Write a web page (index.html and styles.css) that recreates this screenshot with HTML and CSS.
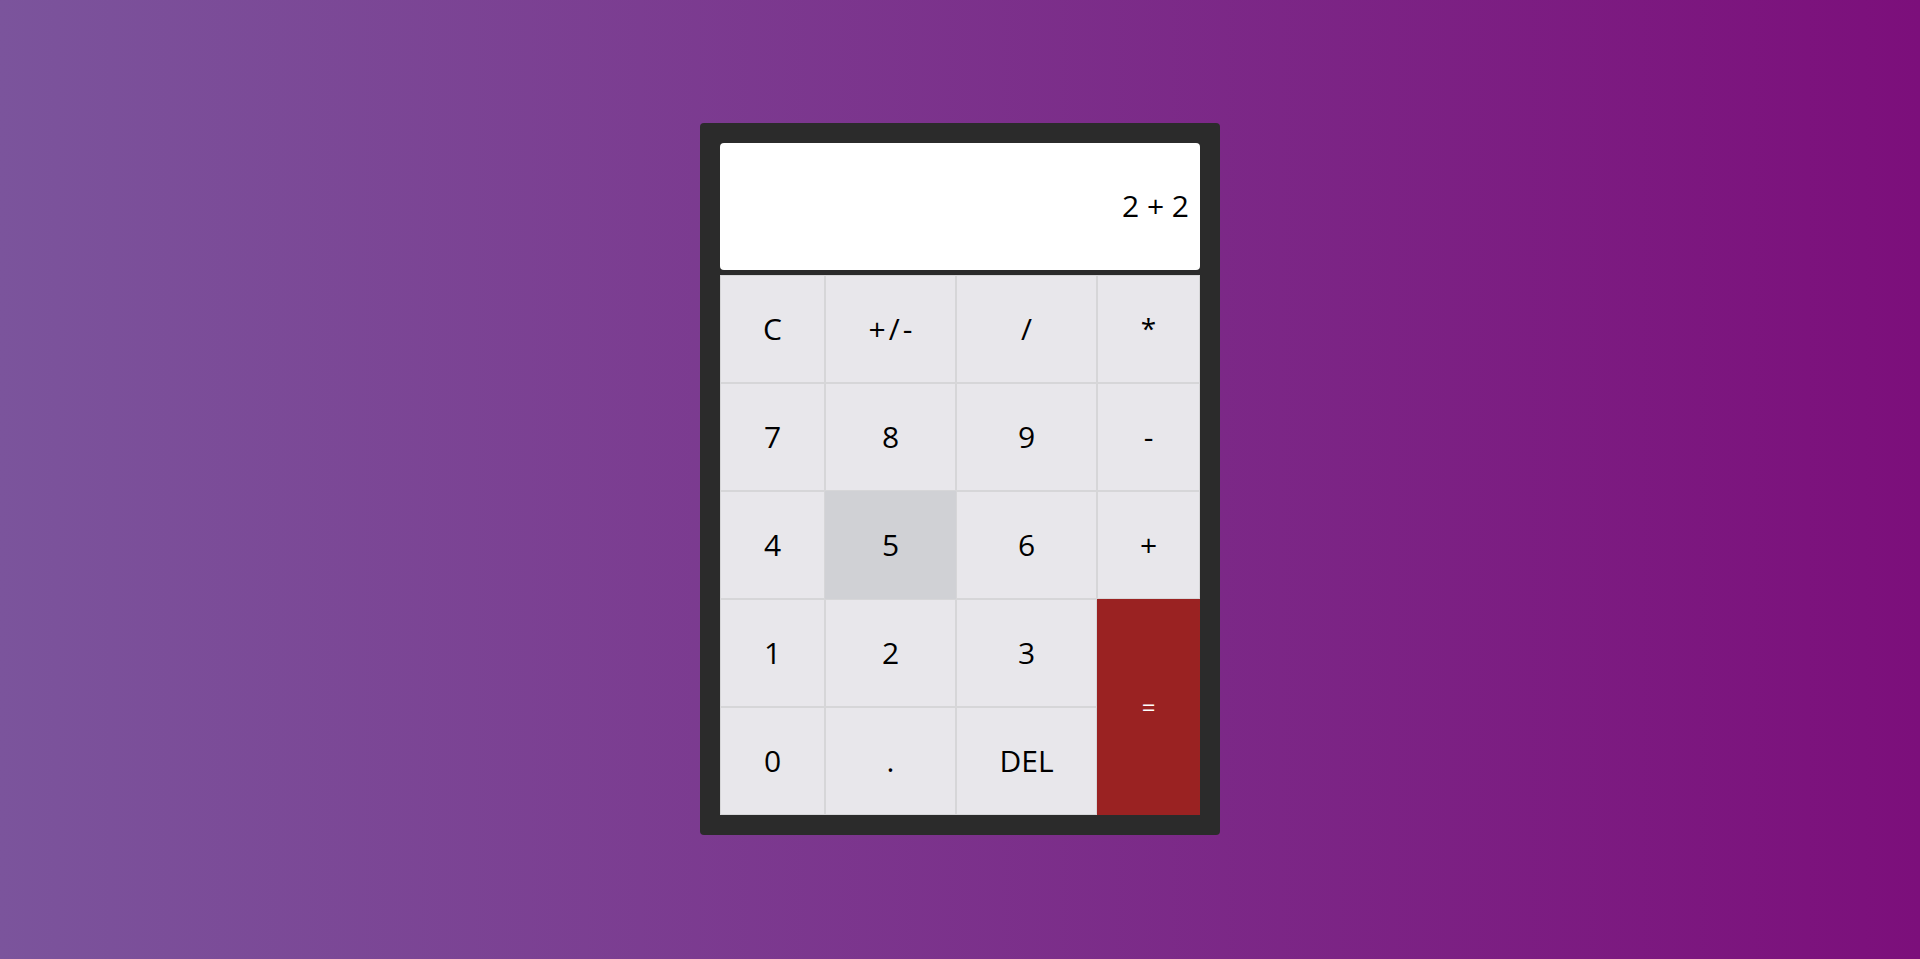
FILE: index.html
```html
<!DOCTYPE html>
<html lang="en">
<head>
<meta charset="utf-8">
<title>Calculator</title>
<link rel="stylesheet" href="styles.css">
</head>
<body>
<div class="calculator">
  <div class="display"><span class="expr">2 + 2</span></div>
  <div class="keys">
    <div class="key">C</div>
    <div class="key key-spaced">+/-</div>
    <div class="key">/</div>
    <div class="key key-small">*</div>
    <div class="key">7</div>
    <div class="key">8</div>
    <div class="key">9</div>
    <div class="key">-</div>
    <div class="key">4</div>
    <div class="key key-hover">5</div>
    <div class="key">6</div>
    <div class="key">+</div>
    <div class="key">1</div>
    <div class="key">2</div>
    <div class="key">3</div>
    <div class="key key-equals">=</div>
    <div class="key">0</div>
    <div class="key">.</div>
    <div class="key">DEL</div>
  </div>
</div>
</body>
</html>
```

FILE: styles.css
```css
html, body {
  margin: 0;
  padding: 0;
  height: 100%;
}

body {
  display: flex;
  align-items: center;
  justify-content: center;
  background: linear-gradient(to right, #7b549c, #7c0f7b);
  font-family: "Open Sans", "Noto Sans", sans-serif;
}

.calculator {
  width: 520px;
  box-sizing: border-box;
  padding: 20px;
  background: #2b2b2b;
  border-radius: 4px;
  margin-top: -1px;
}

.display {
  height: 127px;
  background: #ffffff;
  border-radius: 4px;
  margin-bottom: 5px;
  display: flex;
  align-items: center;
  justify-content: flex-end;
  padding-right: 11px;
  box-sizing: border-box;
}

.expr {
  font-size: 30px;
  color: #000;
  padding-bottom: 2px;
}

.keys {
  display: grid;
  grid-template-columns: 105px 131px 141px 103px;
  grid-auto-rows: 108px;
}

.key {
  box-sizing: border-box;
  border: 1px solid #d6d6d8;
  background: #e8e7eb;
  display: flex;
  align-items: center;
  justify-content: center;
  font-size: 30px;
  color: #000;
  padding-bottom: 2px;
}

.key-spaced {
  letter-spacing: 3px;
  padding-left: 3px;
}

.key-small {
  font-size: 28px;
}

.key-hover {
  background: #d0d1d5;
  border-color: #d0d1d5;
}

.key-equals {
  grid-column: 4;
  grid-row: 4 / span 2;
  background: #9a2222;
  border-color: #9a2222;
  color: #fff;
  font-size: 24px;
}
```
